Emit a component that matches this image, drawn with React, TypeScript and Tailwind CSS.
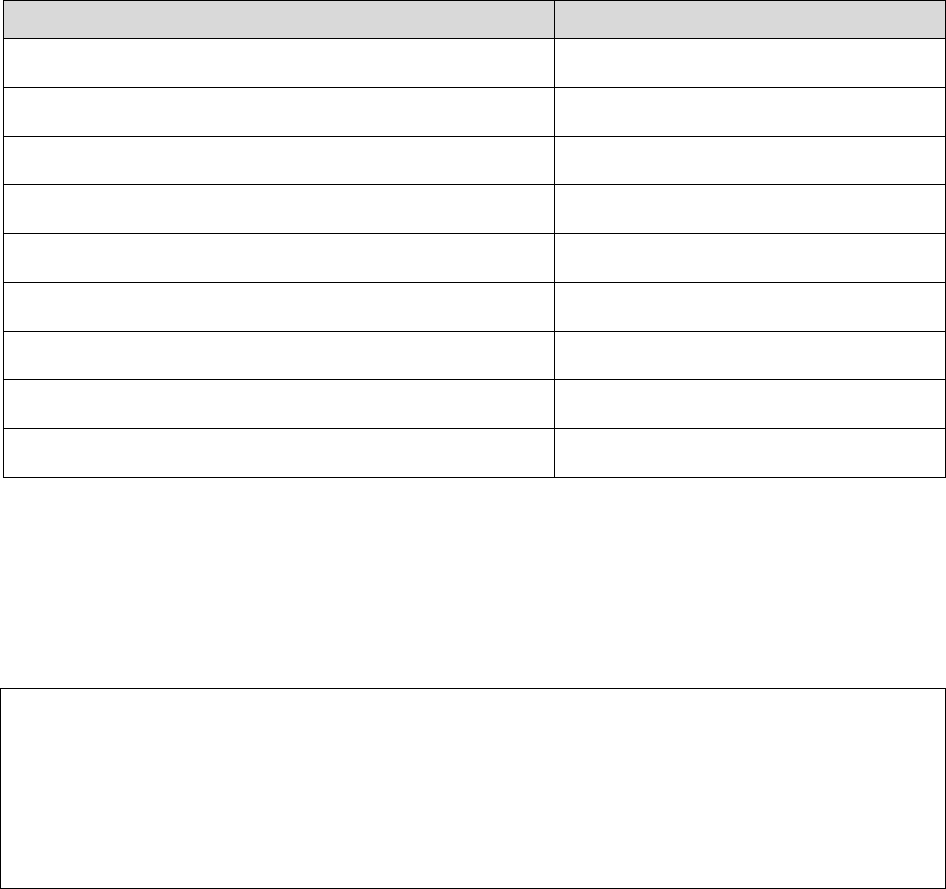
export default function App() {
  const rows = Array.from({ length: 9 });

  return (
    <div className="w-[946px] h-[889px] bg-white" style={{ fontFamily: '"Liberation Sans", Arial, sans-serif' }}>
      <div className="ml-[3px] w-[943px] border-l border-t border-black">
        <div className="flex bg-[#d9d9d9]">
          <div className="w-[551px] h-[38px] border-r border-b border-black" />
          <div className="w-[391px] h-[38px] border-r border-b border-black" />
        </div>
        {rows.map((_, i) => (
          <div key={i} className="flex">
            <div className="w-[551px] h-[48.75px] border-r border-b border-black" />
            <div className="w-[391px] h-[48.75px] border-r border-b border-black" />
          </div>
        ))}
      </div>

      <div className="mt-[210px] w-[946px] h-[201px] border border-black" />
    </div>
  );
}
